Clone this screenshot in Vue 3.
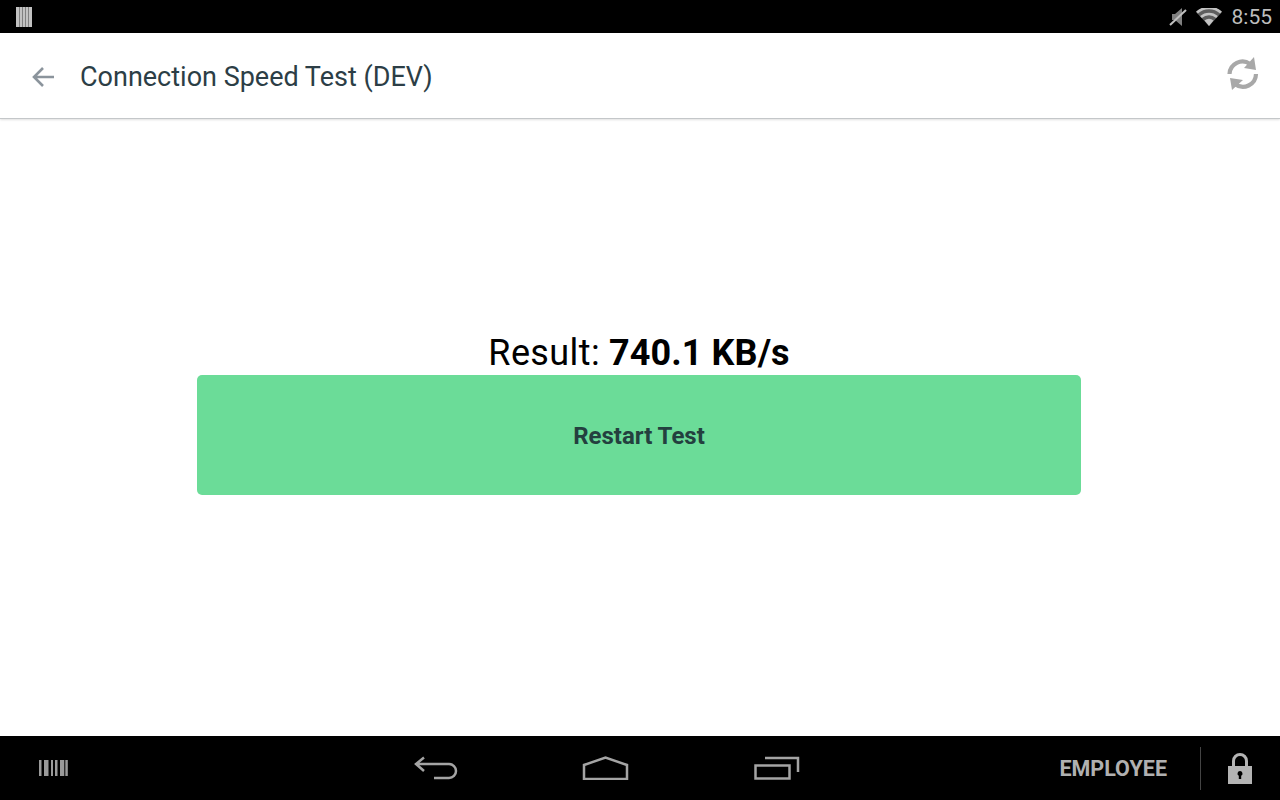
<template>
  <div class="screen">
    <div class="status-bar">
      <svg width="16" height="20" viewBox="0 0 16 20">
        <rect width="16" height="20" fill="#c2c2c2" />
        <path d="M3.500 0v20M6.500 0v20M9.500 0v20M12.500 0v20" stroke="#808080" stroke-width="1" />
      </svg>
      <div class="status-right">
        <svg width="18" height="18" viewBox="0 0 18 18">
          <path d="M3 6h3l7-6v18l-7-6H3z" fill="#808080" />
          <path d="M1 17L17 2" stroke="#c0c0c0" stroke-width="2" />
        </svg>
        <svg width="26" height="18" viewBox="0 0 26 18">
          <path d="M13 18L0 4a19 19 0 0 1 26 0z" fill="#5e5e5e" />
          <path d="M1 4.500a18 18 0 0 1 24 0M5 9a12 12 0 0 1 16 0" stroke="#c4c4c4" stroke-width="2.600" fill="none" />
          <path d="M13 18L8.500 12.500a7 7 0 0 1 9 0z" fill="#c4c4c4" />
        </svg>
        <span class="clock">8:55</span>
      </div>
    </div>

    <header class="app-bar">
      <svg width="24" height="22" viewBox="0 0 24 22">
        <path d="M23 11H3M12 2l-9 9 9 9" stroke="#8b949c" stroke-width="2.600" fill="none" />
      </svg>
      <h1 class="title">Connection Speed Test (DEV)</h1>
      <svg class="refresh" width="32" height="34" viewBox="0 0 32 34">
        <path d="M2.500 17A13 13 0 0 1 23 7" stroke="#a8a8a8" stroke-width="4.200" fill="none" />
        <path d="M29 17A13 13 0 0 1 8 27" stroke="#a8a8a8" stroke-width="4.200" fill="none" />
        <path d="M27 0l2 13-12-2zM5 33L3 21l13 2z" fill="#a8a8a8" />
      </svg>
    </header>

    <main class="content">
      <p class="result"><span class="result-label">Result:</span> <strong>740.1 KB/s</strong></p>
      <button class="restart">Restart Test</button>
    </main>

    <footer class="nav-bar">
      <svg width="29" height="16" viewBox="0 0 29 16">
        <g fill="#9a9a9a">
          <rect x="0" width="2.500" height="16" />
          <rect x="5" width="4.500" height="16" />
          <rect x="12" width="2" height="16" />
          <rect x="16" width="2.500" height="16" />
          <rect x="21" width="4.300" height="16" />
          <rect x="26.300" width="2.500" height="16" />
        </g>
      </svg>
      <div class="nav-buttons">
        <svg width="44" height="24" viewBox="0 0 44 24">
          <path d="M10 1.500L2 8l8 7M2 8h33a7 7 0 0 1 0 14H20" stroke="#a4a4a4" stroke-width="2.500" fill="none" />
        </svg>
        <svg width="48" height="24" viewBox="0 0 48 24">
          <path d="M2 23V9L23.500 1.500 45 9v14z" stroke="#a4a4a4" stroke-width="2.500" fill="none" />
        </svg>
        <svg width="46" height="24" viewBox="0 0 46 24">
          <rect x="1.500" y="9.500" width="34" height="13" stroke="#a4a4a4" stroke-width="2.500" fill="none" />
          <path d="M11 2h33v14" stroke="#a4a4a4" stroke-width="2.500" fill="none" />
        </svg>
      </div>
      <div class="nav-right">
        <span class="employee">EMPLOYEE</span>
        <span class="divider"></span>
        <svg width="24" height="31" viewBox="0 0 24 31">
          <path d="M5.500 14V8a6.500 6.500 0 0 1 13 0v6" stroke="#b4b4b4" stroke-width="3" fill="none" />
          <path fill-rule="evenodd" d="M0 13h24v18H0zM12 18a2.500 2.500 0 0 0-1.200 4.700V26h2.400v-3.300A2.500 2.500 0 0 0 12 18z" fill="#b4b4b4" />
        </svg>
      </div>
    </footer>
  </div>
</template>

<script setup>
</script>

<style>
html, body {
  margin: 0;
  background: #fff;
}
</style>

<style scoped>
.screen {
  display: flex;
  flex-direction: column;
  width: 1280px;
  height: 800px;
  overflow: hidden;
  font-family: Roboto, sans-serif;
}

.status-bar {
  display: flex;
  align-items: center;
  justify-content: space-between;
  flex: 0 0 33px;
  padding: 0 8px 0 16px;
  background: #000;
}

.status-right {
  display: flex;
  align-items: center;
  gap: 9px;
}

.clock {
  font-size: 21px;
  color: #bdbdbd;
  margin-left: 1px;
}

.app-bar {
  display: flex;
  align-items: center;
  flex: 0 0 86px;
  padding: 2px 21px 0 31px;
  background: #fff;
  border-bottom: 1px solid #c4c7c9;
  box-shadow: 0 1px 2px rgba(0, 0, 0, 0.12);
  box-sizing: border-box;
}

.title {
  flex: 1;
  margin: 0 0 0 25px;
  font-size: 27px;
  font-weight: 400;
  color: #2c3e46;
}

.refresh {
  margin-top: -5px;
}

.content {
  flex: 1;
  display: flex;
  flex-direction: column;
  align-items: center;
  padding: 213px 2px 0 0;
}

.result {
  margin: 0;
  font-size: 36px;
  line-height: 43px;
  color: #000;
}

.result-label {
  letter-spacing: 0.4px;
}

.result strong {
  letter-spacing: 0.1px;
}

.restart {
  width: 884px;
  height: 120px;
  padding: 2px 0 0;
  border: 0;
  border-radius: 5px;
  background: #6bdc98;
  color: #23403f;
  font-family: inherit;
  font-size: 24px;
  font-weight: 700;
}

.nav-bar {
  display: flex;
  align-items: center;
  flex: 0 0 64px;
  padding: 0 28px 0 39px;
  background: #000;
}

.nav-buttons {
  display: flex;
  align-items: center;
  gap: 124px;
  margin-left: 346px;
}

.nav-right {
  display: flex;
  align-items: center;
  margin-left: auto;
}

.employee {
  margin-top: 1px;
  font-size: 21.500px;
  font-weight: 700;
  color: #b0b0b0;
}

.divider {
  width: 1px;
  height: 43px;
  margin: 0 27px 0 33px;
  background: #444;
}
</style>
